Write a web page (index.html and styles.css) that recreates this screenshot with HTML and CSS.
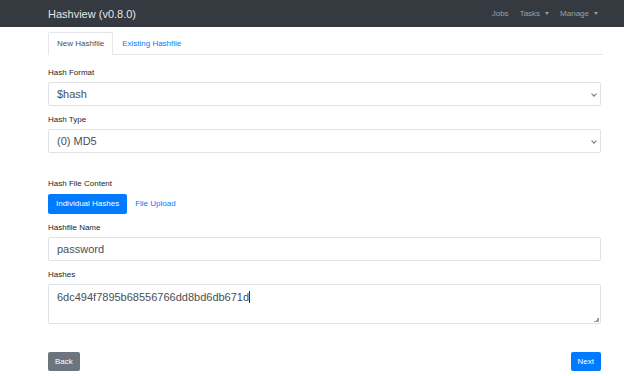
FILE: index.html
```html
<!DOCTYPE html>
<html lang="en">
<head>
  <meta charset="UTF-8" />
  <title>Hashview</title>
  <link rel="stylesheet" href="styles.css">
</head>
<body>

  <!-- top bar -->
  <nav class="navbar">
    <div class="brand">Hashview (v0.8.0)</div>
    <div class="nav-links">
      <span class="nav-link">Jobs</span>
      <span class="nav-link dropdown">Tasks</span>
      <span class="nav-link dropdown">Manage</span>
    </div>
  </nav>

  <div class="container">
    <div class="tabs">
      <div class="tab active">New Hashfile</div>
      <div class="tab">Existing Hashfile</div>
    </div>

    <div class="form-group">
      <label>Hash Format</label>
      <div class="select">$hash</div>
    </div>

    <div class="form-group">
      <label>Hash Type</label>
      <div class="select">(0) MD5</div>
    </div>

    <div class="form-group content-group">
      <label>Hash File Content</label>
      <div class="pills">
        <span class="pill active">Individual Hashes</span>
        <span class="pill">File Upload</span>
      </div>
    </div>

    <div class="form-group">
      <label>Hashfile Name</label>
      <div class="input">password</div>
    </div>

    <div class="form-group">
      <label>Hashes</label>
      <div class="textarea">6dc494f7895b68556766dd8bd6db671d<span class="caret"></span></div>
    </div>

    <div class="actions">
      <button class="btn btn-secondary">Back</button>
      <button class="btn btn-primary">Next</button>
    </div>
  </div>

</body>
</html>
```

FILE: styles.css
```css
body {
  margin: 0;
  font-family: 'Liberation Sans', Arial, sans-serif;
  background: #ffffff;
  color: #212529;
}

.navbar {
  height: 27px;
  background: #343a40;
  display: flex;
  align-items: center;
  justify-content: space-between;
  padding: 0 26px 0 48px;
}

.brand {
  color: rgba(255, 255, 255, 0.9);
  font-size: 11px;
}

.nav-links {
  display: flex;
  gap: 11px;
}

.nav-link {
  color: rgba(255, 255, 255, 0.5);
  font-size: 8px;
}

.nav-link.dropdown::after {
  content: "";
  display: inline-block;
  margin-left: 5px;
  vertical-align: 1px;
  border-top: 3px solid rgba(255, 255, 255, 0.5);
  border-left: 2.5px solid transparent;
  border-right: 2.5px solid transparent;
}

.container {
  width: 553px;
  margin-left: 48px;
}

.tabs {
  display: flex;
  margin-top: 5px;
  border-bottom: 1px solid #e4e7ea;
  margin-right: -2px;
  margin-bottom: 12px;
}

.tab {
  height: 21px;
  line-height: 21px;
  padding: 0 8px;
  font-size: 8px;
  color: #007bff;
  border: 1px solid transparent;
  border-bottom: none;
  border-radius: 2px 2px 0 0;
  margin-bottom: -1px;
}

.tab.active {
  color: #495057;
  background: #fff;
  border-color: #e4e7ea;
  height: 22px;
}

.form-group {
  margin-bottom: 8px;
}

.form-group label {
  display: block;
  font-size: 8px;
  line-height: 12px;
  margin-bottom: 3px;
  color: #212529;
}

.select,
.input,
.textarea {
  box-sizing: border-box;
  border: 1px solid #dfe3e7;
  border-radius: 2px;
  font-size: 11px;
  color: #495057;
  padding: 0 8px;
  background: #fff;
}

.select,
.input {
  height: 24px;
  line-height: 22px;
}

.select {
  position: relative;
}

.select::after {
  content: "";
  position: absolute;
  right: 4px;
  top: 9px;
  width: 3px;
  height: 3px;
  border-right: 1px solid #6c757d;
  border-bottom: 1px solid #6c757d;
  transform: rotate(45deg);
}

.content-group {
  margin-top: 25px;
}

.pills {
  display: flex;
  align-items: center;
  margin-top: 4px;
}

.pill {
  font-size: 8px;
  color: #007bff;
  height: 20px;
  line-height: 20px;
  padding: 0 8px;
  border-radius: 2px;
}

.pill.active {
  background: #007bff;
  color: #fff;
}

.textarea {
  height: 40px;
  padding-top: 5px;
  line-height: 14px;
  position: relative;
}

.textarea::after {
  content: "";
  position: absolute;
  right: 1px;
  bottom: 1px;
  width: 5px;
  height: 5px;
  background: linear-gradient(135deg, transparent 50%, #9aa0a6 50%);
}

.caret {
  display: inline-block;
  width: 1px;
  height: 12px;
  background: #333;
  vertical-align: -2px;
}

.actions {
  display: flex;
  justify-content: space-between;
  margin-top: 28px;
}

.btn {
  border: none;
  border-radius: 2px;
  height: 19px;
  padding: 0 7px;
  font-family: inherit;
  font-size: 8px;
  color: #fff;
}

.btn-secondary {
  background: #6c757d;
}

.btn-primary {
  background: #007bff;
}
```
